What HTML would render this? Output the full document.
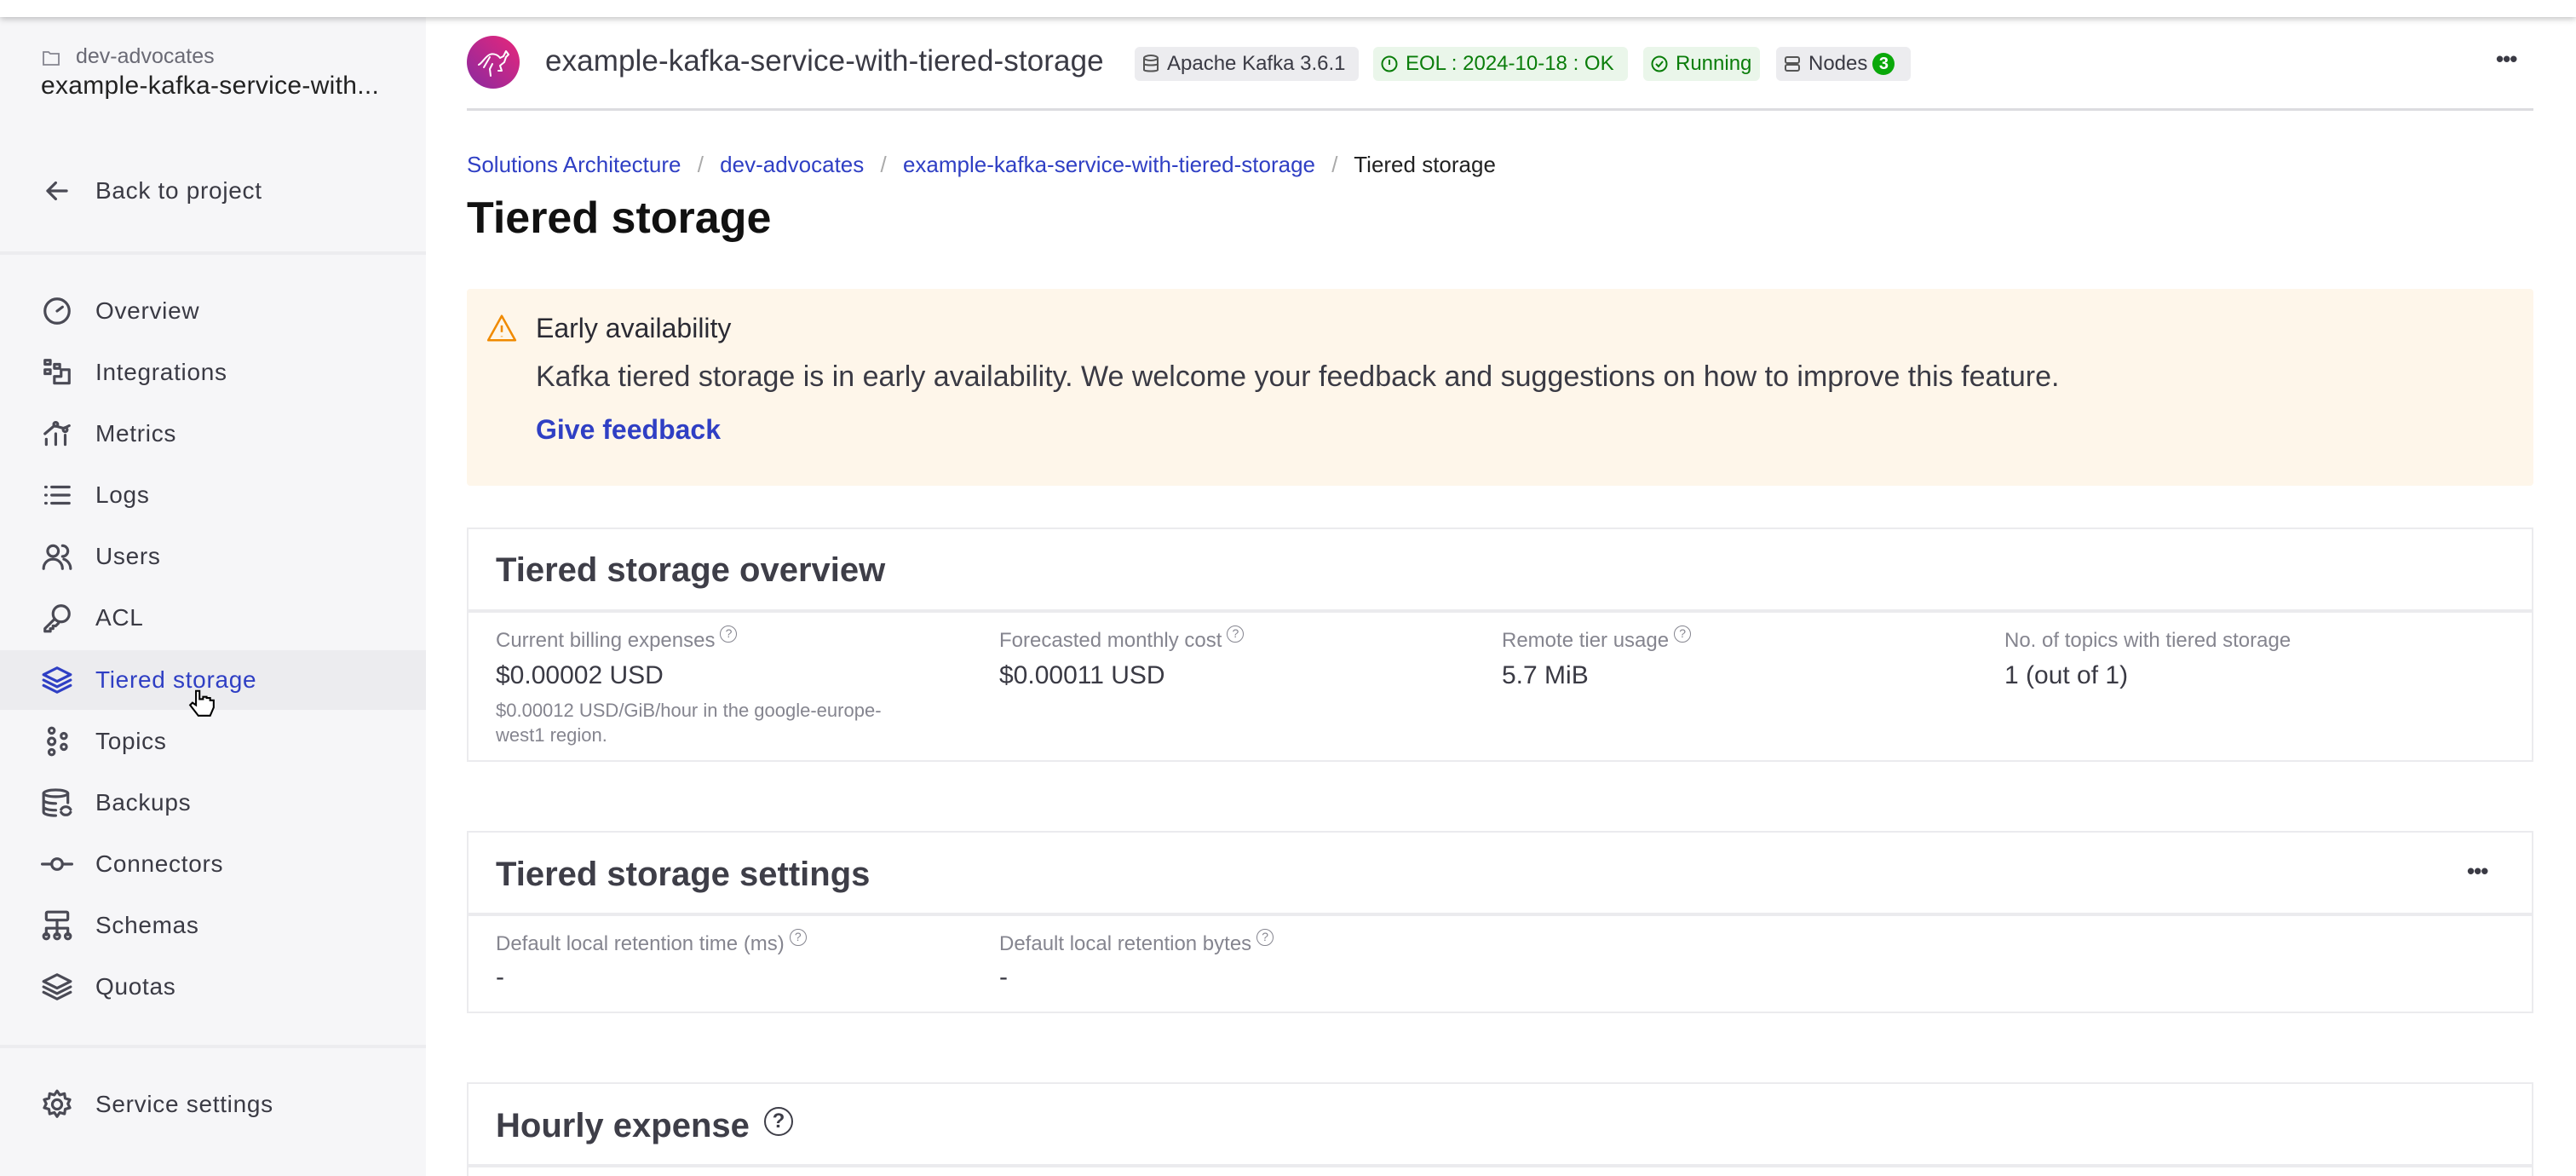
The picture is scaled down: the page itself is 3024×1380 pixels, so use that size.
<!DOCTYPE html>
<html><head><meta charset="utf-8"><style>
*{box-sizing:border-box;margin:0;padding:0}
html,body{width:3024px;height:1380px;overflow:hidden}
body{background:#fff;font-family:"Liberation Sans",sans-serif;color:#3a3a44;position:relative}
.top{position:absolute;left:0;top:0;width:3024px;height:20px;background:#fff;box-shadow:0 2px 8px rgba(0,0,0,.25);z-index:5}
.side{position:absolute;left:0;top:20px;width:500px;height:1360px;background:#f6f6f8}
.sep{position:absolute;left:0;width:500px;height:4px;background:#ececef}
.nav{position:absolute;left:0;width:500px;height:70px;display:flex;align-items:center;font-size:28px;color:#3a3a44;letter-spacing:.7px}
.nav svg{position:absolute;left:48px;width:38px;height:38px;fill:none;stroke:#4a4a55;stroke-width:2;stroke-linecap:round;stroke-linejoin:round}
.nav span{position:absolute;left:112px}
.nav.act{background:#ececef;color:#2f3fc4}
.nav.act svg{stroke:#2f3fc4}
.abs{position:absolute;white-space:nowrap}
.badge{position:absolute;top:55px;height:40px;border-radius:6px;font-size:24px;display:flex;align-items:center;padding:0 8px;gap:8px}
.card{position:absolute;left:548px;width:2426px;border:2px solid #ebebee;background:#fff;overflow:hidden}
.card .hd{border-bottom:4px solid #ebebee;position:relative}
.ct{position:absolute;left:32px;font-size:40px;font-weight:bold;color:#3e3e48}
.lbl{position:absolute;font-size:24px;color:#85858f}
.val{position:absolute;font-size:30px;color:#3a3a44}
.q{display:inline-block;width:20px;height:20px;border:1.6px solid #85858f;border-radius:50%;font-size:14px;line-height:17px;text-align:center;vertical-align:top;margin-left:6px;margin-top:-4px}
.dots{position:absolute;font-size:26px;font-weight:bold;letter-spacing:-1px;color:#3a3a44}
</style></head><body>
<div class="top"></div>
<div class="side">
  <svg class="abs" style="left:48px;top:36px" width="24" height="24" viewBox="0 0 24 24" fill="none" stroke="#85858f" stroke-width="1.8"><path d="M3 5h6l2 2h10v13H3z"/></svg>
  <div class="abs" style="left:89px;top:32px;font-size:25px;color:#6a6a75">dev-advocates</div>
  <div class="abs" style="left:48px;top:64px;font-size:30px;color:#222;font-weight:500;letter-spacing:.3px">example-kafka-service-with...</div>
  <div class="sep" style="top:275px"></div>
  <div class="nav" style="top:169px"><svg viewBox="0 0 24 24"><path d="M19 12H5M11 6l-6 6 6 6"/></svg><span>Back to project</span></div>
  <div class="nav" style="top:310px"><svg viewBox="0 0 24 24"><circle cx="12" cy="12" r="9"/><path d="M12 12l4-3"/></svg><span>Overview</span></div>
  <div class="nav" style="top:382px"><svg viewBox="0 0 24 24"><rect x="3" y="3" width="4" height="3"/><rect x="3" y="10" width="4" height="3"/><rect x="10" y="6" width="4" height="3"/><path d="M10 15h5v-5h6v10H10z"/></svg><span>Integrations</span></div>
  <div class="nav" style="top:454px"><svg viewBox="0 0 24 24"><path d="M3 12l7-6 7 2 4-2M4 16v4M11 12v8M18 13v7"/><circle cx="11" cy="5" r="1.5"/><circle cx="18" cy="9" r="1.5"/></svg><span>Metrics</span></div>
  <div class="nav" style="top:526px"><svg viewBox="0 0 24 24"><path d="M8 6h13M8 12h13M8 18h13M3.5 6h.5M3.5 12h.5M3.5 18h.5"/></svg><span>Logs</span></div>
  <div class="nav" style="top:598px"><svg viewBox="0 0 24 24"><circle cx="9" cy="8" r="4"/><path d="M2 21c0-4 3-7 7-7s7 3 7 7M16 4a4 4 0 010 8M22 21c0-3-2-6-5-7"/></svg><span>Users</span></div>
  <div class="nav" style="top:670px"><svg viewBox="0 0 24 24"><circle cx="15" cy="9" r="6"/><path d="M10 13l-7 7v2h4v-2h2v-2h2l2-2"/></svg><span>ACL</span></div>
  <div class="nav act" style="top:743px"><svg viewBox="0 0 24 24"><path d="M12 3l10 5-10 5L2 8zM2 12l10 5 10-5M2 16l10 5 10-5"/></svg><span>Tiered storage</span></div>
  <div class="nav" style="top:815px"><svg viewBox="0 0 24 24"><circle cx="8" cy="4" r="2"/><circle cx="8" cy="20" r="2"/><circle cx="8" cy="12" r="2.5"/><circle cx="17" cy="8" r="2"/><circle cx="17" cy="16" r="2"/></svg><span>Topics</span></div>
  <div class="nav" style="top:887px"><svg viewBox="0 0 24 24"><ellipse cx="11" cy="5" rx="9" ry="2.5"/><path d="M2 5v14c0 1.5 4 2.5 9 2.5M20 5v7M2 10c0 1.5 4 2.5 9 2.5M2 15c0 1.5 4 2.5 9 2.5"/><path d="M15 19a4 4 0 007 0M22 17a4 4 0 00-7 0"/></svg><span>Backups</span></div>
  <div class="nav" style="top:959px"><svg viewBox="0 0 24 24"><circle cx="12" cy="12" r="4"/><path d="M1 12h7M16 12h7"/></svg><span>Connectors</span></div>
  <div class="nav" style="top:1031px"><svg viewBox="0 0 24 24"><rect x="4" y="2" width="16" height="6" rx="1"/><path d="M12 8v11M4 14h16M4 14v5M20 14v5"/><circle cx="4" cy="20" r="2"/><circle cx="12" cy="20" r="2"/><circle cx="20" cy="20" r="2"/></svg><span>Schemas</span></div>
  <div class="nav" style="top:1103px"><svg viewBox="0 0 24 24"><path d="M12 3l10 5-10 5L2 8zM2 12l10 5 10-5M2 16l10 5 10-5"/></svg><span>Quotas</span></div>
  <div class="sep" style="top:1206px"></div>
  <div class="nav" style="top:1241px"><svg viewBox="0 0 24 24"><circle cx="12" cy="12" r="3.5"/><path d="M12 2l2 3 3.5-1 .5 3.5 3.5 1-1.5 3 1.5 3-3.5 1-.5 3.5-3.5-1-2 3-2-3-3.5 1-.5-3.5-3.5-1 1.5-3-1.5-3 3.5-1 .5-3.5 3.5 1z"/></svg><span>Service settings</span></div>
</div>
<svg class="abs" style="left:220px;top:808px" width="34" height="36" viewBox="0 0 24 26"><path d="M7 2v12l-3-2-2 2 7 9h10l3-7v-6h-3v-2h-3v-1h-3V9H10V2z" fill="#fff" stroke="#000" stroke-width="1.5"/></svg>

<svg class="abs" style="left:548px;top:42px" width="62" height="62" viewBox="0 0 62 62"><defs><linearGradient id="g" x1="1" y1="0" x2="0" y2="1"><stop offset="0" stop-color="#e8267a"/><stop offset="1" stop-color="#8a2aa0"/></linearGradient></defs><circle cx="31" cy="31" r="31" fill="url(#g)"/><path d="M14 34c4-2 8-10 13-12s10 1 12 4l4-2 3-6 3 4-3 3-2 6-5 4 2 6h-4M30 33l-3 6 1 8M27 25l-7 12" fill="none" stroke="#fff" stroke-width="2" stroke-linecap="round" stroke-linejoin="round"/></svg>
<div class="abs" style="left:640px;top:52px;font-size:35px;color:#3a3a44;letter-spacing:.1px">example-kafka-service-with-tiered-storage</div>
<div class="badge" style="left:1332px;width:263px;background:#ececef;color:#3a3a44"><svg width="22" height="24" viewBox="0 0 22 24" fill="none" stroke="#555" stroke-width="2"><ellipse cx="11" cy="5" rx="8" ry="3"/><path d="M3 5v14c0 2 16 2 16 0V5M3 12c0 2 16 2 16 0"/></svg>Apache Kafka 3.6.1</div>
<div class="badge" style="left:1612px;width:299px;background:#eaf6ea;color:#0a7d0a"><svg width="22" height="22" viewBox="0 0 22 22" fill="none" stroke="#0a7d0a" stroke-width="2"><circle cx="11" cy="11" r="8.5"/><path d="M11 6v6"/></svg>EOL : 2024-10-18 : OK</div>
<div class="badge" style="left:1929px;width:137px;background:#eaf6ea;color:#0a7d0a"><svg width="22" height="22" viewBox="0 0 22 22" fill="none" stroke="#0a7d0a" stroke-width="2"><circle cx="11" cy="11" r="8.5"/><path d="M7 11l3 3 5-6"/></svg>Running</div>
<div class="badge" style="left:2085px;width:158px;background:#ececef;color:#3a3a44"><svg width="22" height="22" viewBox="0 0 22 22" fill="none" stroke="#555" stroke-width="2"><rect x="3" y="3" width="16" height="7" rx="2"/><rect x="3" y="12" width="16" height="7" rx="2"/></svg>Nodes<span style="display:inline-block;width:26px;height:26px;border-radius:50%;background:#0aa80a;color:#fff;font-size:20px;font-weight:bold;text-align:center;line-height:26px;margin-left:-2px">3</span></div>
<div class="dots" style="left:2930px;top:54px">•••</div>
<div class="abs" style="left:548px;top:127px;width:2426px;height:3px;background:#dcdce0"></div>

<div class="abs" style="left:548px;top:178px;font-size:26px;color:#2f3fc4">Solutions Architecture <span style="color:#aaa;margin:0 12px">/</span> dev-advocates <span style="color:#aaa;margin:0 12px">/</span> example-kafka-service-with-tiered-storage <span style="color:#aaa;margin:0 12px">/</span> <span style="color:#222">Tiered storage</span></div>
<div class="abs" style="left:548px;top:226px;font-size:52px;font-weight:bold;color:#111">Tiered storage</div>

<div class="abs" style="left:548px;top:339px;width:2426px;height:231px;background:#fef6ea;border-radius:4px"></div>
<svg class="abs" style="left:570px;top:367px" width="38" height="36" viewBox="0 0 24 22" fill="none" stroke="#f08a00" stroke-width="1.6" stroke-linejoin="round"><path d="M12 2L22 20H2z"/><path d="M12 9v5M12 17v.5"/></svg>
<div class="abs" style="left:629px;top:367px;font-size:32px;color:#2a2a33">Early availability</div>
<div class="abs" style="left:629px;top:423px;font-size:34px;color:#3a3a44">Kafka tiered storage is in early availability. We welcome your feedback and suggestions on how to improve this feature.</div>
<div class="abs" style="left:629px;top:486px;font-size:32px;color:#2f3fc4;font-weight:bold">Give feedback</div>

<div class="card" style="top:619px;height:275px">
  <div class="hd" style="height:98px"><div class="ct" style="top:26px">Tiered storage overview</div></div>
  <div class="lbl" style="left:32px;top:117px">Current billing expenses<span class="q">?</span></div>
  <div class="val" style="left:32px;top:155px">$0.00002 USD</div>
  <div class="lbl" style="left:32px;top:198px;font-size:22px;line-height:29px">$0.00012 USD/GiB/hour in the google-europe-<br>west1 region.</div>
  <div class="lbl" style="left:623px;top:117px">Forecasted monthly cost<span class="q">?</span></div>
  <div class="val" style="left:623px;top:155px">$0.00011 USD</div>
  <div class="lbl" style="left:1213px;top:117px">Remote tier usage<span class="q">?</span></div>
  <div class="val" style="left:1213px;top:155px">5.7 MiB</div>
  <div class="lbl" style="left:1803px;top:117px">No. of topics with tiered storage</div>
  <div class="val" style="left:1803px;top:155px">1 (out of 1)</div>
</div>

<div class="card" style="top:975px;height:214px">
  <div class="hd" style="height:98px"><div class="ct" style="top:27px">Tiered storage settings</div><div class="dots" style="left:2346px;top:30px">•••</div></div>
  <div class="lbl" style="left:32px;top:117px">Default local retention time (ms)<span class="q">?</span></div>
  <div class="val" style="left:32px;top:153px">-</div>
  <div class="lbl" style="left:623px;top:117px">Default local retention bytes<span class="q">?</span></div>
  <div class="val" style="left:623px;top:153px">-</div>
</div>

<div class="card" style="top:1270px;height:110px;border-bottom:none">
  <div class="hd" style="height:98px"><div class="ct" style="top:27px">Hourly expense <span class="q" style="width:34px;height:34px;font-size:24px;line-height:30px;border-width:2.5px;color:#3e3e48;border-color:#3e3e48;margin-top:0">?</span></div></div>
</div>
</body></html>
